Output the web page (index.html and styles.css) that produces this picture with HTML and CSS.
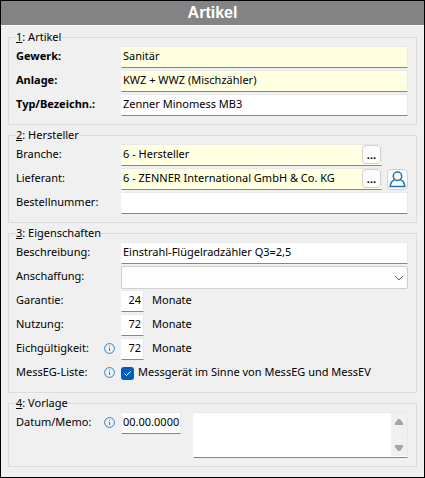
FILE: index.html
```html
<!DOCTYPE html>
<html lang="de">

<head>
    <meta charset="UTF-8">
    <meta name="viewport" content="width=device-width, initial-scale=1.0">
    <title>Artikel</title>
    <link rel="stylesheet" href="styles.css">
</head>

<body>
    <h1>Artikel</h1>
    <form>
        <fieldset>
            <legend><u>1</u>: Artikel</legend>
            <div class="row required">
                <label for="gewerk">Gewerk:</label>
                <input type="text" id="gewerk" class="lookup" value="Sanitär">
            </div>
            <div class="row required">
                <label for="anlage">Anlage:</label>
                <input type="text" id="anlage" class="lookup" value="KWZ + WWZ (Mischzähler)">
            </div>
            <div class="row required">
                <label for="typ">Typ/Bezeichn.:</label>
                <input type="text" id="typ" value="Zenner Minomess MB3">
            </div>
        </fieldset>

        <fieldset>
            <legend><u>2</u>: Hersteller</legend>
            <div class="row with-contact">
                <label for="branche">Branche:</label>
                <div class="picker">
                    <input type="text" id="branche" class="lookup" value="6 - Hersteller">
                    <button type="button" class="more" aria-label="Branche auswählen">...</button>
                </div>
            </div>
            <div class="row with-contact">
                <label for="lieferant">Lieferant:</label>
                <div class="picker">
                    <input type="text" id="lieferant" class="lookup" value="6 - ZENNER International GmbH &amp; Co. KG">
                    <button type="button" class="more" aria-label="Lieferant auswählen">...</button>
                </div>
                <button type="button" class="contact" aria-label="Kontakt">
                    <svg width="17" height="17" viewBox="0 0 17 17">
                        <circle cx="8.5" cy="5.2" r="4.2" />
                        <path d="M5.7 8.6C3 9.7 1.4 12 1.2 15.6H15.8C15.6 12 14 9.7 11.3 8.6" />
                    </svg>
                </button>
            </div>
            <div class="row">
                <label for="bestellnummer">Bestellnummer:</label>
                <input type="text" id="bestellnummer">
            </div>
        </fieldset>

        <fieldset>
            <legend><u>3</u>: Eigenschaften</legend>
            <div class="row">
                <label for="beschreibung">Beschreibung:</label>
                <input type="text" id="beschreibung" value="Einstrahl-Flügelradzähler Q3=2,5">
            </div>
            <div class="row">
                <label for="anschaffung">Anschaffung:</label>
                <div class="dropdown">
                    <select id="anschaffung">
                        <option value=""></option>
                    </select>
                    <svg width="10" height="6" viewBox="0 0 10 6">
                        <path d="M1 1L5 5L9 1" />
                    </svg>
                </div>
            </div>
            <div class="row">
                <label for="garantie">Garantie:</label>
                <input type="text" id="garantie" class="months" value="24">
                <span class="unit">Monate</span>
            </div>
            <div class="row">
                <label for="nutzung">Nutzung:</label>
                <input type="text" id="nutzung" class="months" value="72">
                <span class="unit">Monate</span>
            </div>
            <div class="row">
                <label for="eich">Eichgültigkeit:
                    <svg class="info" width="11" height="11" viewBox="0 0 11 11">
                        <circle cx="5.5" cy="5.5" r="4.9" />
                        <path d="M5.5 5V8M5.5 2.8V3.8" />
                    </svg>
                </label>
                <input type="text" id="eich" class="months" value="72">
                <span class="unit">Monate</span>
            </div>
            <div class="row">
                <span class="caption">MessEG-Liste:
                    <svg class="info" width="11" height="11" viewBox="0 0 11 11">
                        <circle cx="5.5" cy="5.5" r="4.9" />
                        <path d="M5.5 5V8M5.5 2.8V3.8" />
                    </svg>
                </span>
                <input type="checkbox" id="messeg" checked>
                <label for="messeg" class="check-text">Messgerät im Sinne von MessEG und MessEV</label>
            </div>
        </fieldset>

        <fieldset>
            <legend><u>4</u>: Vorlage</legend>
            <div class="row memo-row">
                <label for="datum">Datum/Memo:
                    <svg class="info" width="11" height="11" viewBox="0 0 11 11">
                        <circle cx="5.5" cy="5.5" r="4.9" />
                        <path d="M5.5 5V8M5.5 2.8V3.8" />
                    </svg>
                </label>
                <input type="text" id="datum" class="date" value="00.00.0000">
                <div class="memo">
                    <textarea id="memo" aria-label="Memo"></textarea>
                    <div class="scroll">
                        <svg width="8" height="6" viewBox="0 0 8 6">
                            <path d="M3 0H5L8 4V6H0V4Z" />
                        </svg>
                        <svg width="8" height="6" viewBox="0 0 8 6">
                            <path d="M0 0H8V2L5 6H3L0 2Z" />
                        </svg>
                    </div>
                </div>
            </div>
        </fieldset>
    </form>
</body>

</html>
```
FILE: styles.css
```css
* {
    box-sizing: border-box;
}

body {
    margin: 0;
    min-height: 100vh;
    border: 1px solid #000;
    background: #f0f0f0;
    color: #000;
    font-family: "Noto Sans", sans-serif;
    font-size: 11px;
    line-height: 16px;
}

h1 {
    margin: 0;
    border-bottom: 1px solid #fff;
    background: #848284;
    color: #fff;
    font-family: "Liberation Sans", Arial, sans-serif;
    font-size: 16px;
    line-height: 24px;
    text-align: center;
}

form {
    display: flex;
    flex-direction: column;
    gap: 2px;
    padding: 3px 7px 10px;
}

fieldset {
    margin: 0;
    min-width: 0;
    padding: 0 8px 7px 7px;
    border: 1px solid #dcdcdc;
}

legend {
    height: 16px;
    padding: 0;
}

.row {
    display: flex;
    align-items: center;
    height: 24px;
}

.row > label:first-child,
.caption {
    display: flex;
    align-items: center;
    justify-content: space-between;
    flex: none;
    width: 105px;
    padding-right: 6px;
    padding-bottom: 2px;
    white-space: nowrap;
}

.required label {
    font-weight: bold;
}

input,
select,
textarea,
button {
    margin: 0;
    color: #000;
    font: inherit;
}

input[type="text"],
textarea {
    flex: 1;
    min-width: 0;
    height: 22px;
    padding: 0 2px 3px 1px;
    border: 1px solid #e9e9e9;
    border-bottom-color: #858585;
    border-left-color: #fff;
    border-radius: 1px;
    background: #fff;
    outline: none;
}

input.lookup {
    background: #ffffe1;
    border-left-color: #ffffe1;
}

.picker {
    position: relative;
    display: flex;
    flex: 1;
}

.with-contact .picker {
    margin-right: 26px;
}

.picker input[type="text"] {
    padding-right: 22px;
}

button {
    display: flex;
    align-items: center;
    justify-content: center;
    padding: 0;
    border: 1px solid #d0d0d0;
    border-radius: 4px;
    background: #fdfdfd;
}

.more {
    position: absolute;
    top: 1px;
    right: 1px;
    width: 19px;
    height: 19px;
    font-weight: bold;
}

.contact {
    flex: none;
    width: 21px;
    height: 21px;
    margin-left: -21px;
}

.contact svg {
    flex: none;
    fill: none;
    stroke: #1d70b8;
    stroke-width: 1.5;
}

.dropdown {
    position: relative;
    display: flex;
    flex: 1;
}

.dropdown select {
    flex: 1;
    height: 23px;
    border: 1px solid #cfcfcf;
    border-radius: 2px;
    background: #fdfdfd;
    appearance: none;
}

.dropdown svg {
    position: absolute;
    top: 9px;
    right: 4px;
    fill: none;
    stroke: #5c5c5c;
    pointer-events: none;
}

input[type="text"].months {
    flex: none;
    width: 23px;
    text-align: right;
}

.unit {
    margin-left: 8px;
    padding-bottom: 2px;
}

.info {
    fill: none;
    stroke: #2f7fc1;
}

input[type="checkbox"] {
    flex: none;
    width: 13px;
    height: 13px;
    border-radius: 3px;
    background: #005fb8 url("data:image/svg+xml,%3Csvg xmlns='http://www.w3.org/2000/svg' viewBox='0 0 13 13'%3E%3Cpath d='M3.5 6.5L5.5 8.5L9.5 4.5' fill='none' stroke='white'/%3E%3C/svg%3E");
    appearance: none;
}

.check-text {
    margin-left: 4px;
    padding-bottom: 2px;
    white-space: nowrap;
}

.memo-row {
    align-items: flex-start;
    height: 48px;
    padding-top: 1px;
}

.memo-row > label:first-child {
    height: 22px;
}

input[type="text"].date {
    flex: none;
    width: 60px;
    padding-right: 0;
}

.memo {
    position: relative;
    display: flex;
    flex: 1;
    margin-left: 12px;
}

.memo textarea {
    height: 46px;
    resize: none;
}

.scroll {
    position: absolute;
    top: 1px;
    right: 1px;
    bottom: 2px;
    display: flex;
    flex-direction: column;
    align-items: center;
    justify-content: space-between;
    width: 16px;
    padding: 6px 0 5px;
    background: #f0f0f0;
}

.scroll svg {
    fill: #a6a6a6;
}
```
